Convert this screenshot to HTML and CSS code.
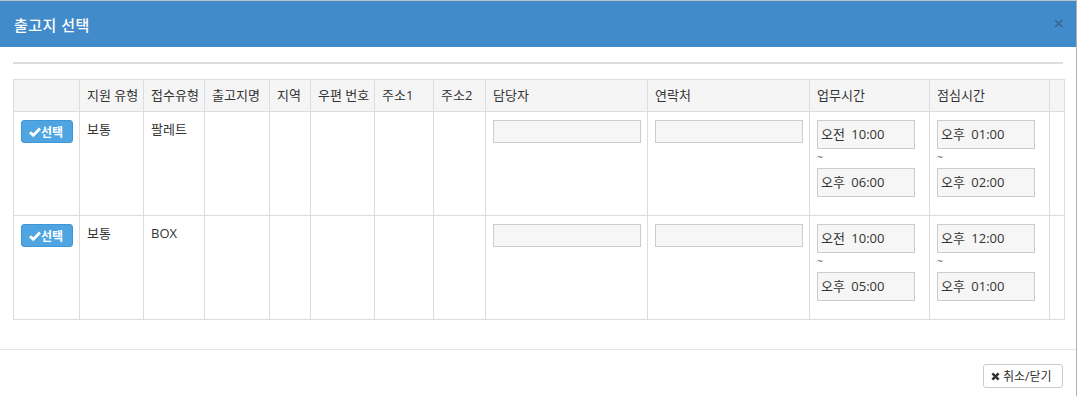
FILE: index.html
```html
<!DOCTYPE html>
<html lang="ko">
<head>
    <meta charset="UTF-8">
    <meta name="viewport" content="width=device-width, initial-scale=1.0">
    <title>출고지 선택</title>
    <link rel="stylesheet" href="styles.css">
</head>
<body>
    <div class="modal">
        <div class="modal-header">
            <h4 class="modal-title">출고지 선택</h4>
            <span class="close">&times;</span>
        </div>
        <div class="modal-body">
            <hr class="divider">
            <table class="grid">
                <colgroup>
                    <col style="width:66px">
                    <col style="width:64px">
                    <col style="width:61px">
                    <col style="width:65px">
                    <col style="width:41px">
                    <col style="width:64px">
                    <col style="width:59px">
                    <col style="width:52px">
                    <col style="width:162px">
                    <col style="width:162px">
                    <col style="width:120px">
                    <col style="width:120px">
                    <col style="width:15px">
                </colgroup>
                <tr>
                    <th></th>
                    <th>지원 유형</th>
                    <th>접수유형</th>
                    <th>출고지명</th>
                    <th>지역</th>
                    <th>우편 번호</th>
                    <th>주소1</th>
                    <th>주소2</th>
                    <th>담당자</th>
                    <th>연락처</th>
                    <th>업무시간</th>
                    <th>점심시간</th>
                    <th></th>
                </tr>
                <tr>
                    <td><button class="btn-select"><svg class="ico" viewBox="0 0 12 10"><path d="M1 5.2 L4.3 8.3 L11 1.6" /></svg>선택</button></td>
                    <td>보통</td>
                    <td>팔레트</td>
                    <td></td>
                    <td></td>
                    <td></td>
                    <td></td>
                    <td></td>
                    <td><input class="field" type="text"></td>
                    <td><input class="field" type="text"></td>
                    <td>
                        <div class="time-group">
                            <div class="time">오전 10:00</div>
                            <div class="tilde">~</div>
                            <div class="time">오후 06:00</div>
                        </div>
                    </td>
                    <td>
                        <div class="time-group">
                            <div class="time">오후 01:00</div>
                            <div class="tilde">~</div>
                            <div class="time">오후 02:00</div>
                        </div>
                    </td>
                    <td></td>
                </tr>
                <tr>
                    <td><button class="btn-select"><svg class="ico" viewBox="0 0 12 10"><path d="M1 5.2 L4.3 8.3 L11 1.6" /></svg>선택</button></td>
                    <td>보통</td>
                    <td>BOX</td>
                    <td></td>
                    <td></td>
                    <td></td>
                    <td></td>
                    <td></td>
                    <td><input class="field" type="text"></td>
                    <td><input class="field" type="text"></td>
                    <td>
                        <div class="time-group">
                            <div class="time">오전 10:00</div>
                            <div class="tilde">~</div>
                            <div class="time">오후 05:00</div>
                        </div>
                    </td>
                    <td>
                        <div class="time-group">
                            <div class="time">오후 12:00</div>
                            <div class="tilde">~</div>
                            <div class="time">오후 01:00</div>
                        </div>
                    </td>
                    <td></td>
                </tr>
            </table>
        </div>
        <div class="modal-footer">
            <button class="btn-close"><svg class="ico-x" viewBox="0 0 10 10"><path d="M1.5 1.5 L8.5 8.5 M8.5 1.5 L1.5 8.5" /></svg>취소/닫기</button>
        </div>
    </div>
</body>
</html>
```

FILE: styles.css
```css
body {
    margin: 0;
    background: #fff;
    font-family: "Open Sans", "Noto Sans CJK KR", sans-serif;
    font-size: 13px;
    color: #333;
}
.modal {
    width: 1076px;
    height: 395px;
    border-top: 1px solid #b9c4cf;
    border-right: 1px solid #b0b0b0;
    background: #fff;
}
.modal-header {
    height: 46px;
    background-color: #428bca;
    display: flex;
    align-items: center;
    justify-content: space-between;
    padding: 0 14px;
}
.modal-title {
    margin: 0;
    color: #fff;
    font-size: 15px;
    font-weight: 500;
    letter-spacing: 0.5px;
}
.close {
    color: #2f6590;
    font-size: 19px;
    line-height: 1;
    margin-right: -2px;
    margin-top: -2px;
}
.modal-body {
    padding: 15px 13px 29px 13px;
    border-bottom: 1px solid #e5e5e5;
}
.divider {
    margin: 0 0 15px 0;
    border: 0;
    border-top: 2px solid #ddd;
}
table.grid {
    width: 1051px;
    table-layout: fixed;
    border-collapse: collapse;
}
.grid th, .grid td {
    border: 1px solid #ddd;
    text-align: left;
    vertical-align: top;
}
.grid th {
    background-color: #f5f5f5;
    font-weight: normal;
    padding: 7px 7px;
    line-height: 17px;
    white-space: nowrap;
}
.grid td {
    padding: 8px 7px;
    line-height: 18px;
}
.btn-select {
    display: flex;
    align-items: center;
    width: 52px;
    height: 23px;
    padding: 0 0 0 7px;
    background-color: #4ea5e2;
    border: 1px solid #3f97d6;
    border-radius: 3px;
    color: #fff;
    font-family: inherit;
    font-size: 12px;
    font-weight: bold;
}
.ico {
    width: 12px;
    height: 10px;
    margin-right: 0;
    fill: none;
    stroke: #fff;
    stroke-width: 2.8;
}
.field {
    display: block;
    box-sizing: border-box;
    width: 148px;
    height: 23px;
    background: #f6f6f6;
    border: 1px solid #ccc;
    margin: 0;
}
.time-group {
    margin-bottom: 10px;
}
.time {
    box-sizing: border-box;
    width: 98px;
    height: 29px;
    background: #f6f6f6;
    border: 1px solid #ccc;
    padding: 4px 0 0 3px;
    font-size: 13px;
    line-height: 18px;
    word-spacing: 3px;
}
.tilde {
    height: 19px;
    font-size: 10px;
    line-height: 17px;
    color: #555;
}
.modal-footer {
    display: flex;
    justify-content: flex-end;
    padding: 14px 13px 0 0;
}
.btn-close {
    display: flex;
    align-items: center;
    height: 24px;
    width: 80px;
    padding: 0 0 0 7px;
    background: #fff;
    border: 1px solid #ccc;
    border-radius: 3px;
    color: #333;
    font-family: inherit;
    font-size: 12px;
}
.ico-x {
    width: 9px;
    height: 9px;
    margin-right: 3px;
    fill: none;
    stroke: #333;
    stroke-width: 2.8;
}
```
